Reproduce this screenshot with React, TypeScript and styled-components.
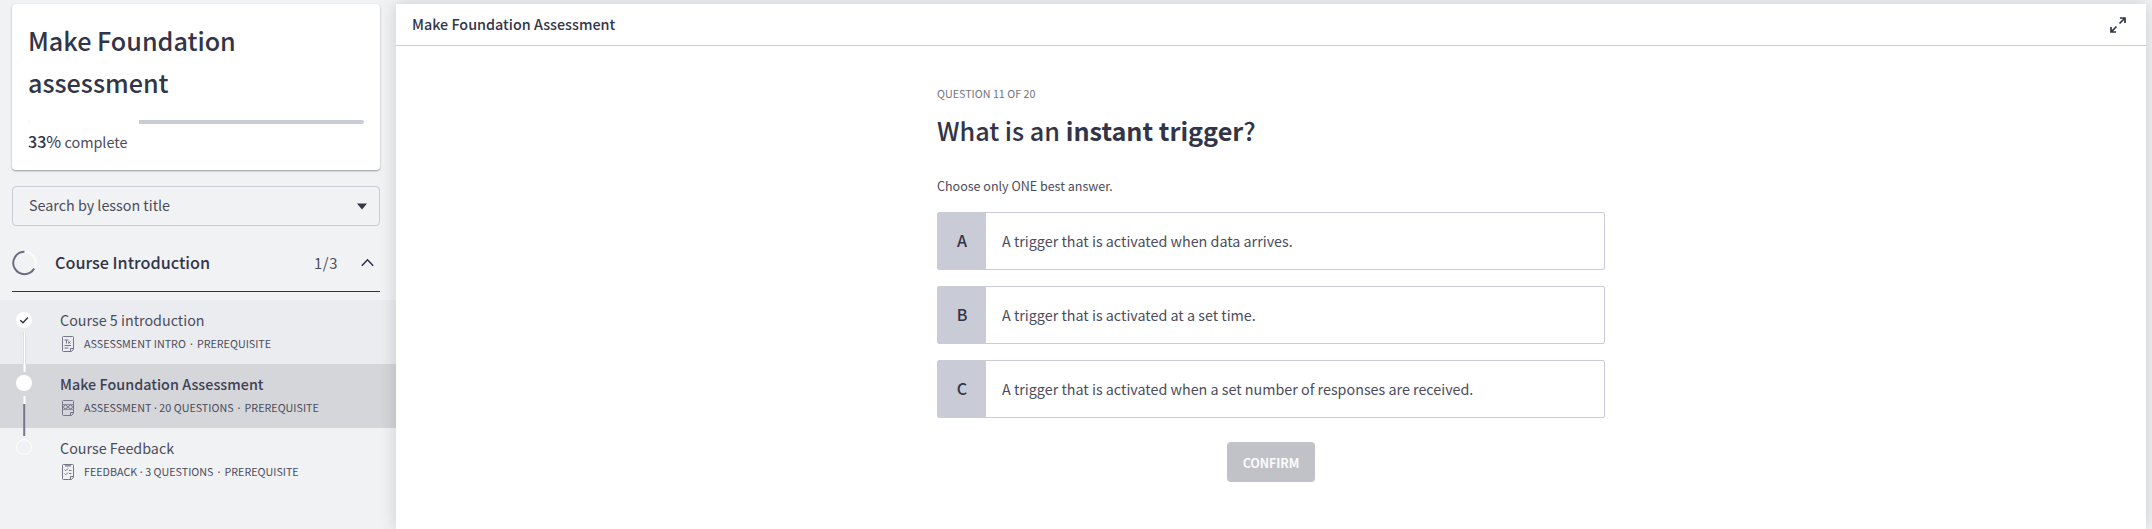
import React from "react";
import styled, { createGlobalStyle, css } from "styled-components";

const ink = "#323448";
const slate = "#4b4c5c";
const line = "#c9cbd6";

const GlobalStyle = createGlobalStyle`
  * { box-sizing: border-box; }
  body {
    margin: 0;
    background: #f1f2f4;
    color: ${slate};
    font-family: "Noto Sans CJK SC", "Noto Sans", sans-serif;
    font-size: 14.32px;
    overflow: hidden;
  }
  h1, h2, h3, p { margin: 0; font-weight: 400; }
`;

const Page = styled.div`
  display: flex;
  height: 529px;
`;

const Sidebar = styled.aside`
  width: 396px;
  flex: none;
  padding-top: 4px;
  background: #f1f2f4;
`;

const CourseCard = styled.section`
  height: 166px;
  margin: 0 16px 0 12px;
  padding: 15px 16px 0;
  background: #fff;
  border-radius: 4px;
  box-shadow: 0 1px 2px rgba(0, 0, 0, 0.38);
`;

const CourseTitle = styled.h1`
  font-size: 25.15px;
  font-weight: 500;
  line-height: 42px;
  color: ${ink};
`;

const ProgressTrack = styled.div`
  display: flex;
  height: 4px;
  margin-top: 17px;
  border-radius: 2px;
  background: ${line};
  overflow: hidden;
`;

const ProgressFill = styled.div`
  background: #fff;
`;

const ProgressText = styled.p`
  margin-top: 5px;
  line-height: 24px;
  font-size: 14.4px;
  b { font-size: 16.1px; font-weight: 500; color: ${ink}; }
  i { font-size: 16.1px; font-style: normal; color: ${ink}; }
`;

const SearchBox = styled.div`
  display: flex;
  align-items: center;
  justify-content: space-between;
  height: 40px;
  margin: 16px 16px 0 12px;
  padding: 0 12px 0 16px;
  border: 1px solid ${line};
  border-radius: 4px;
  line-height: 36px;
  span { padding-bottom: 2px; }
`;

const SectionHeader = styled.header`
  display: flex;
  align-items: center;
  height: 66px;
  margin: 0 16px 0 12px;
  padding: 8px 6px 0 0;
  border-bottom: 1px solid ${ink};
`;

const SectionTitle = styled.h2`
  flex: 1;
  margin-left: 17px;
  padding-bottom: 1px;
  font-size: 16.2px;
  font-weight: 500;
  line-height: 24px;
  color: ${ink};
`;

const SectionCount = styled.span`
  margin-right: 23px;
  font-size: 14.8px;
  letter-spacing: 0.6px;
  line-height: 24px;
`;

const LessonList = styled.div`
  margin-top: 8px;
`;

const LessonRow = styled.div<{ $tone?: "done" | "current" }>`
  display: flex;
  height: 64px;
  ${(p) => p.$tone === "done" && css`background: #ebecf0;`}
  ${(p) => p.$tone === "current" && css`background: #d5d6da;`}
`;

const Rail = styled.div`
  width: 60px;
  flex: none;
`;

const LessonText = styled.div`
  padding-top: 8px;
`;

const LessonTitle = styled.h3<{ $strong?: boolean }>`
  font-size: 14.32px;
  font-weight: ${(p) => (p.$strong ? 500 : 400)};
  letter-spacing: ${(p) => (p.$strong ? "0.04px" : "0")};
  line-height: 24px;
  color: ${(p) => (p.$strong ? "#3e3f54" : slate)};
`;

const LessonMeta = styled.p`
  display: flex;
  align-items: center;
  height: 24px;
  gap: 9px;
  font-size: 10.74px;
  line-height: 24px;
`;

const Dot = styled.b<{ $wide?: boolean }>`
  display: inline-block;
  width: ${(p) => (p.$wide ? 11 : 8)}px;
  font-family: "Noto Sans", sans-serif;
  font-weight: 500;
  line-height: 12px;
  text-align: center;
`;

const Main = styled.main`
  position: relative;
  width: 1750px;
  margin-top: 4px;
  background: #fff;
  box-shadow: 0 0 16px rgba(0, 0, 0, 0.16);
`;

const TopBar = styled.header`
  display: flex;
  align-items: center;
  justify-content: space-between;
  height: 42px;
  padding: 0 20px 0 16px;
  border-bottom: 1px solid ${line};
`;

const TopTitle = styled.h2`
  padding-bottom: 2px;
  font-size: 14.37px;
  font-weight: 500;
  line-height: 38px;
  color: ${ink};
`;

const Question = styled.section`
  display: flex;
  flex-direction: column;
  width: 668px;
  margin-left: 541px;
  padding-top: 36px;
`;

const Counter = styled.p`
  font-size: 10.74px;
  line-height: 24px;
  color: #717380;
`;

const Prompt = styled.h1`
  margin-top: 3px;
  font-size: 25.2px;
  font-weight: 500;
  line-height: 42px;
  color: ${ink};
`;

const Hint = styled.p`
  margin: 23px 0 14px;
  font-size: 12.53px;
  line-height: 24px;
`;

const Option = styled.div`
  display: flex;
  height: 58px;
  margin-bottom: 16px;
  border: 1px solid ${line};
  border-radius: 2px;
  line-height: 56px;
`;

const OptionKey = styled.span`
  width: 48px;
  margin-right: 16px;
  background: ${line};
  color: ${ink};
  font-size: 16.1px;
  font-weight: 500;
  line-height: 55px;
  text-align: center;
`;

const ConfirmButton = styled.button`
  align-self: center;
  width: 88px;
  height: 40px;
  margin-top: 8px;
  padding: 0;
  border: 0;
  border-radius: 4px;
  background: #c1c2c7;
  color: #fafafb;
  font: 700 12.53px/39px "Noto Sans CJK SC", sans-serif;
  letter-spacing: -0.1px;
`;

const Caret = () => (
  <svg width="10" height="7" viewBox="0 0 10 7"><path d="M0 0.5h10L5 6.5z" fill={ink} /></svg>
);

const SectionRing = () => (
  <svg width="26" height="26" viewBox="0.5 0 26 26" fill="none" strokeWidth="2">
    <circle cx="13" cy="13" r="11.2" stroke="#fbfbfc" />
    <path d="M13 1.8A11.2 11.2 0 1 0 22.7 18.6" stroke="#6b6b82" />
  </svg>
);

const ChevronUp = () => (
  <svg width="13" height="9" viewBox="0 0 13 9"><path d="M0.8 7.8l5.7-6 5.7 6" fill="none" stroke={ink} strokeWidth="1.6" /></svg>
);

const ExpandIcon = () => (
  <svg width="16" height="16" viewBox="0 0 16 16" fill="none" stroke={ink} strokeWidth="1.7">
    <path d="M9.500 6.500l5-5M10 1h5v5M6.500 9.500l-5 5M1 10v5h5" />
  </svg>
);

const RailMark = ({ state }: { state: "done" | "current" | "todo" }) => (
  <svg width="60" height="64" viewBox="0 0 60 64">
    {state === "done" && (
      <>
        <path d="M24.500 32v32" stroke="#cfd0d5" strokeWidth="3" />
        <path d="M24.500 32v32" stroke="#fff" strokeWidth="1.6" />
        <circle cx="24" cy="20" r="8" fill="#fff" />
        <path d="M20.300 20.200l2.600 2.600 5-5.300" fill="none" stroke={ink} strokeWidth="1.400" />
      </>
    )}
    {state === "current" && (
      <>
        <path d="M24.500 0v8M24.500 32v8" stroke="#fff" strokeWidth="2" />
        <path d="M24.200 40v24" stroke="#76768c" strokeWidth="2" />
        <circle cx="24" cy="19" r="8" fill="#fff" />
      </>
    )}
    {state === "todo" && (
      <>
        <path d="M24.200 0v8" stroke="#76768c" strokeWidth="2" />
        <circle cx="24" cy="19" r="7.500" fill="none" stroke="#fff" />
      </>
    )}
  </svg>
);

const DocIcon = ({ kind }: { kind: "text" | "quiz" | "survey" }) => (
  <svg width="15" height="16" viewBox="0 0 15 16" fill="none" stroke="#74768a" strokeWidth="1">
    <path d="M3.500 0.500h9q1 0 1 1v11.500l-2 2.500h-8q-1 0-1-1v-13q0-1 1-1zM13.500 12.500h-3v3" />
    {kind === "text" && <path d="M4.500 4h4M6.500 4v3.500M8 5.500l2.500 2M10.500 5.500l-2.500 2M4.500 9.500h6.500M4.500 12h4" />}
    {kind === "quiz" && (
      <>
        <circle cx="5.500" cy="7" r="1.900" />
        <circle cx="10.500" cy="7" r="1.900" />
        <path d="M2.500 4.500h11M2.500 9.500h11M7 8l2-2" strokeWidth="0.700" />
      </>
    )}
    {kind === "survey" && <path d="M5 1h6M5 2h6M4.500 5.500l1.300 1.300L8 4.500M4.500 9.500l1.300 1.300L8 8.500M9 6.500h2.500M9 9.500h2.500" />}
  </svg>
);

const lessons = [
  { title: "Course 5 introduction", type: "ASSESSMENT INTRO", state: "done", kind: "text" },
  { title: "Make Foundation Assessment", type: "ASSESSMENT", count: "20 QUESTIONS", state: "current", kind: "quiz" },
  { title: "Course Feedback", type: "FEEDBACK", count: "3 QUESTIONS", state: "todo", kind: "survey" },
] as const;

const options = [
  ["A", "A trigger that is activated when data arrives."],
  ["B", "A trigger that is activated at a set time."],
  ["C", "A trigger that is activated when a set number of responses are received."],
];

export default function App() {
  return (
    <Page>
      <GlobalStyle />
      <Sidebar>
        <CourseCard>
          <CourseTitle>Make Foundation<br />assessment</CourseTitle>
          <ProgressTrack><ProgressFill style={{ width: "33%" }} /></ProgressTrack>
          <ProgressText><b>33</b><i>%</i> complete</ProgressText>
        </CourseCard>
        <SearchBox><span>Search by lesson title</span><Caret /></SearchBox>
        <SectionHeader>
          <SectionRing />
          <SectionTitle>Course Introduction</SectionTitle>
          <SectionCount>1/3</SectionCount>
          <ChevronUp />
        </SectionHeader>
        <LessonList>
          {lessons.map((l) => (
            <LessonRow key={l.title} $tone={l.state === "todo" ? undefined : l.state}>
              <Rail><RailMark state={l.state} /></Rail>
              <LessonText>
                <LessonTitle $strong={l.state === "current"}>{l.title}</LessonTitle>
                <LessonMeta>
                  <DocIcon kind={l.kind} />
                  <span>
                    {l.type}
                    {"count" in l && <><Dot>·</Dot>{l.count}</>}
                    <Dot $wide>·</Dot>PREREQUISITE
                  </span>
                </LessonMeta>
              </LessonText>
            </LessonRow>
          ))}
        </LessonList>
      </Sidebar>
      <Main>
        <TopBar><TopTitle>Make Foundation Assessment</TopTitle><ExpandIcon /></TopBar>
        <Question>
          <Counter>QUESTION 11 OF 20</Counter>
          <Prompt>What is an <b>instant trigger</b>?</Prompt>
          <Hint>Choose only ONE best answer.</Hint>
          {options.map(([key, text]) => (
            <Option key={key}><OptionKey>{key}</OptionKey>{text}</Option>
          ))}
          <ConfirmButton>CONFIRM</ConfirmButton>
        </Question>
      </Main>
    </Page>
  );
}
